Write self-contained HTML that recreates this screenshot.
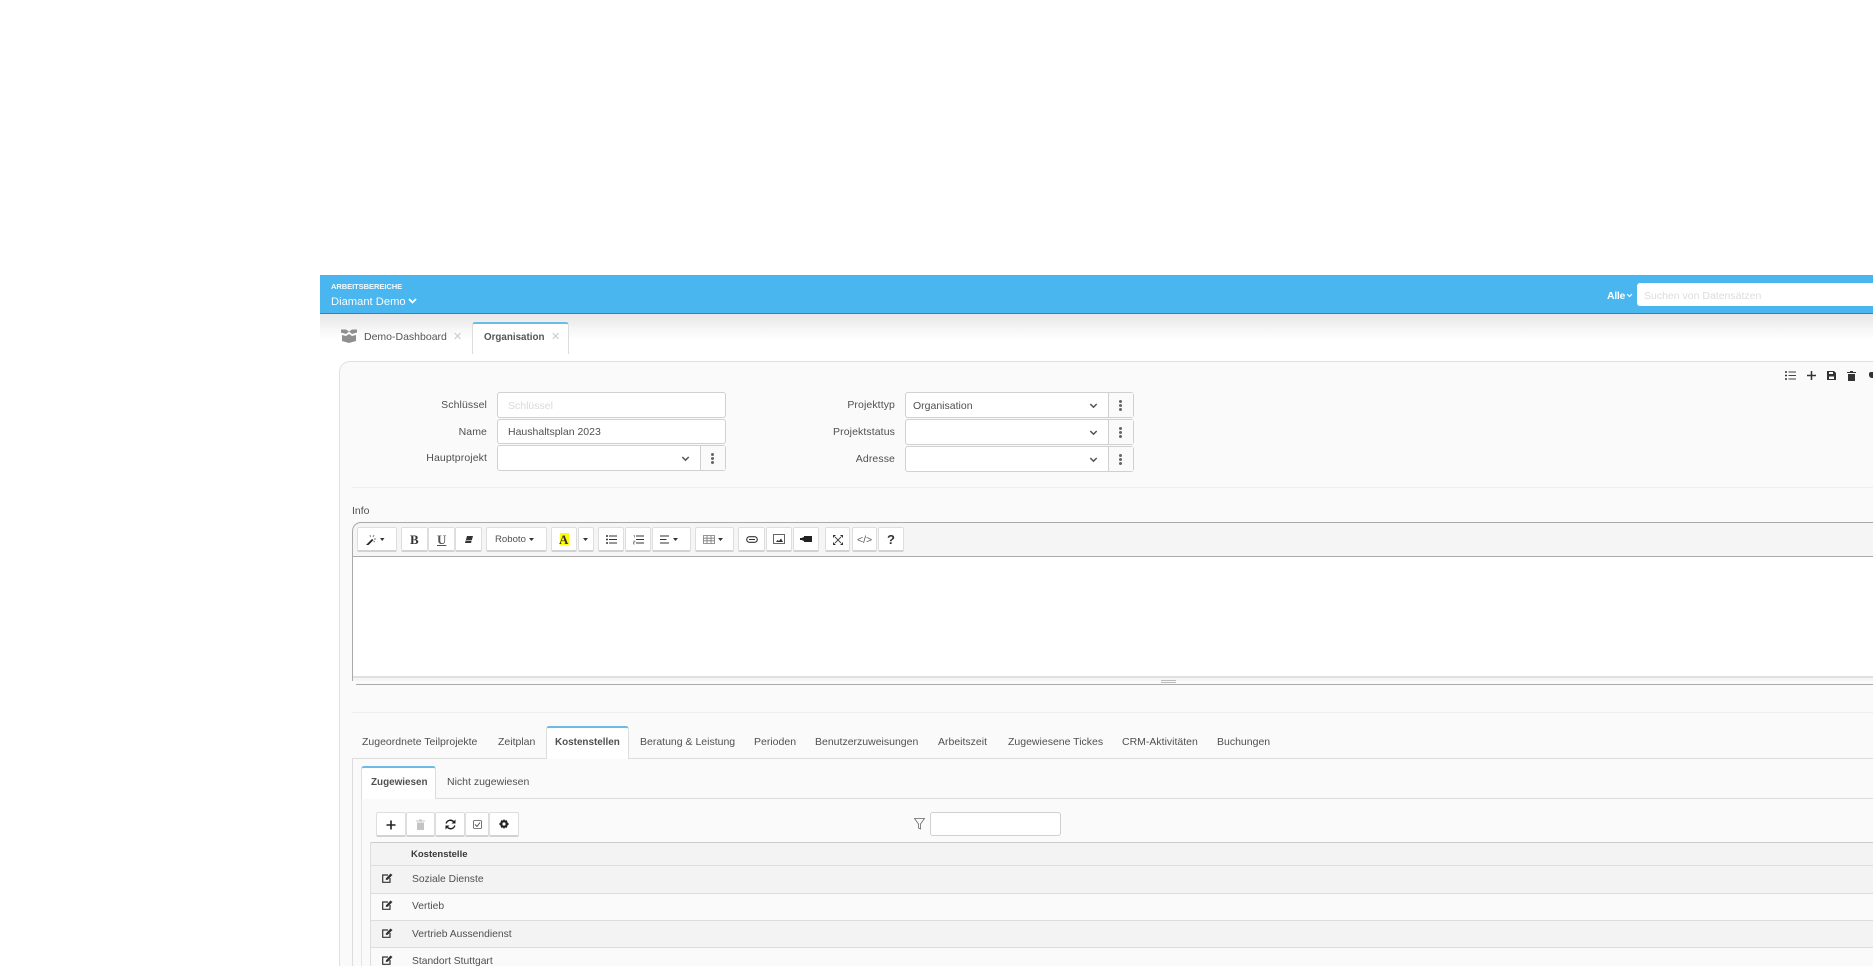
<!DOCTYPE html>
<html lang="de"><head><meta charset="utf-8"><title>Organisation</title>
<style>
html,body{margin:0;padding:0;background:#fff;width:1873px;height:966px;overflow:hidden}
#p{position:relative;width:1873px;height:966px;overflow:hidden;font-family:"Liberation Sans",sans-serif;font-size:10.5px;color:#505050;filter:blur(.35px)}
#p div,#p span.t,#p svg{position:absolute;box-sizing:border-box}
.t{white-space:nowrap;line-height:14px}
.r{text-align:right;letter-spacing:.1px}
.i{background:#fff;border:1px solid #d0d0d0;border-radius:3px}
.b{background:#fff;border:1px solid #dedede;border-bottom:2px solid #d2d2d2;border-radius:2px}
.l{left:0;right:0;height:1px;background:#ddd}
.d{width:3px;height:3px;background:#666;border-radius:50%}
</style></head><body><div id="p">

<!-- header -->
<div style="left:320px;top:275px;width:1553px;height:39px;background:#4ab6ef;border-bottom:1px solid #2b87b5"></div>
<div style="left:320px;top:314px;width:1553px;height:26px;background:linear-gradient(#e6e6e6,#f7f7f7 60%,#fff)"></div>
<span class="t" style="left:331px;top:280px;color:#fff;font-size:7.600px;font-weight:bold;letter-spacing:-.1px;opacity:.92">ARBEITSBEREICHE</span>
<span class="t" style="left:331px;top:295px;color:#fff;font-size:11.200px;opacity:.95">Diamant Demo</span>
<svg style="left:408px;top:298px" width="9" height="6" viewBox="0 0 9 6"><path d="M1 1l3.500 3.500L8 1" fill="none" stroke="#fff" stroke-width="1.800"/></svg>
<span class="t" style="left:1607px;top:289px;color:#fff;font-size:10.500px;font-weight:bold;letter-spacing:-.3px">Alle</span>
<svg style="left:1626px;top:293px" width="7" height="5" viewBox="0 0 7 5"><path d="M1 1l2.500 2.500L6 1" fill="none" stroke="#fff" stroke-width="1.200"/></svg>
<div style="left:1637px;top:283px;width:240px;height:23px;background:#fff;border-radius:3px 0 0 3px"></div>
<span class="t" style="left:1644px;top:289px;color:#dcdcdc">Suchen von Datensätzen</span>

<!-- page tabs -->
<svg style="left:340px;top:329px" width="18" height="14" viewBox="0 0 18 14"><path d="M1 .5h5l3 2-3 2.500-5-1.500zM17 .5h-5L9 2.500l3 2.500 5-1.500zM2 6l4 1 3-2 3 2 4-1v6l-7 2-7-2z" fill="#8f8f8f"/></svg>
<span class="t" style="left:364px;top:330px;color:#555">Demo-Dashboard</span>
<span class="t" style="left:453px;top:330px;color:#cacaca;font-size:11px">✕</span>
<div style="left:472px;top:322px;width:97px;height:32px;background:#fff;border:1px solid #ddd;border-top:2px solid #6bbbe6;border-bottom:0;border-radius:3px 3px 0 0"></div>
<span class="t" style="left:484px;top:331px;color:#555;font-weight:bold;font-size:9.800px">Organisation</span>
<span class="t" style="left:551px;top:330px;color:#cacaca;font-size:11px">✕</span>

<!-- main panel -->
<div style="left:339px;top:361px;width:1560px;height:640px;background:#fafafa;border:1px solid #e0e0e0;border-radius:11px 0 0 0"></div>

<!-- form left -->
<span class="t r" style="left:400px;width:87px;top:398px">Schlüssel</span>
<div class="i" style="left:497px;top:392px;width:229px;height:26px"></div>
<span class="t" style="left:508px;top:399px;color:#dadada">Schlüssel</span>
<span class="t r" style="left:400px;width:87px;top:425px">Name</span>
<div class="i" style="left:497px;top:419px;width:229px;height:25px"></div>
<span class="t" style="left:508px;top:425px">Haushaltsplan 2023</span>
<span class="t r" style="left:400px;width:87px;top:451px">Hauptprojekt</span>
<div class="i" style="left:497px;top:445px;width:229px;height:26px"></div>
<div style="left:700px;top:445px;width:1px;height:26px;background:#d0d0d0"></div>
<div style="left:701px;top:446px;width:24px;height:24px;background:#fafafa"></div>
<svg style="left:681px;top:456px" width="9" height="6" viewBox="0 0 9 6"><path d="M1.300 1l3.200 3.200L7.700 1" fill="none" stroke="#555" stroke-width="1.500"/></svg>
<div class="d" style="left:711px;top:453px"></div><div class="d" style="left:711px;top:457px"></div><div class="d" style="left:711px;top:461px"></div>

<!-- form right -->
<span class="t r" style="left:800px;width:95px;top:398px">Projekttyp</span>
<span class="t r" style="left:800px;width:95px;top:425px">Projektstatus</span>
<span class="t r" style="left:800px;width:95px;top:452px">Adresse</span>
<div class="i" style="left:905px;top:392px;width:229px;height:26px"></div>
<div class="i" style="left:905px;top:419px;width:229px;height:26px"></div>
<div class="i" style="left:905px;top:446px;width:229px;height:26px"></div>
<span class="t" style="left:913px;top:399px">Organisation</span>
<div style="left:1108px;top:392px;width:1px;height:80px;background:#d0d0d0"></div>
<div style="left:1109px;top:393px;width:24px;height:24px;background:#fafafa"></div>
<div style="left:1109px;top:420px;width:24px;height:24px;background:#fafafa"></div>
<div style="left:1109px;top:447px;width:24px;height:24px;background:#fafafa"></div>
<div style="left:1108px;top:418px;width:1px;height:1px;background:#fafafa"></div>
<div style="left:1108px;top:445px;width:1px;height:1px;background:#fafafa"></div>
<svg style="left:1089px;top:403px" width="9" height="6" viewBox="0 0 9 6"><path d="M1.300 1l3.200 3.200L7.700 1" fill="none" stroke="#555" stroke-width="1.500"/></svg>
<svg style="left:1089px;top:430px" width="9" height="6" viewBox="0 0 9 6"><path d="M1.300 1l3.200 3.200L7.700 1" fill="none" stroke="#555" stroke-width="1.500"/></svg>
<svg style="left:1089px;top:457px" width="9" height="6" viewBox="0 0 9 6"><path d="M1.300 1l3.200 3.200L7.700 1" fill="none" stroke="#555" stroke-width="1.500"/></svg>
<div class="d" style="left:1119px;top:400px"></div><div class="d" style="left:1119px;top:404px"></div><div class="d" style="left:1119px;top:408px"></div>
<div class="d" style="left:1119px;top:427px"></div><div class="d" style="left:1119px;top:431px"></div><div class="d" style="left:1119px;top:435px"></div>
<div class="d" style="left:1119px;top:454px"></div><div class="d" style="left:1119px;top:458px"></div><div class="d" style="left:1119px;top:462px"></div>

<!-- record toolbar -->
<svg style="left:1785px;top:371px" width="11" height="9" viewBox="0 0 11 9"><path d="M3.500 1H11M3.500 4.500H11M3.500 8H11" stroke="#444" stroke-width="1"/><path d="M0 1h2M0 4.500h2M0 8h2" stroke="#333" stroke-width="1.500"/></svg>
<svg style="left:1807px;top:371px" width="9" height="9" viewBox="0 0 9 9"><path d="M4.500 0v9M0 4.500h9" stroke="#333" stroke-width="1.500"/></svg>
<svg style="left:1827px;top:371px" width="9" height="9" viewBox="0 0 9 9"><path d="M0 0h7l2 2v7H0z" fill="#333"/><rect x="2" y="1" width="4" height="2" fill="#fafafa"/><rect x="2" y="5.500" width="5" height="2.500" fill="#fafafa"/></svg>
<svg style="left:1847px;top:371px" width="9" height="10" viewBox="0 0 9 10"><path d="M0 1h3V0h3v1h3v1H0zM1 3h7v7H1z" fill="#333"/></svg>
<div style="left:1869px;top:372px;width:6px;height:6px;background:#333;border-radius:2px 0 0 3px"></div>

<div class="l" style="left:352px;right:0;top:487px;background:#eee"></div>
<span class="t" style="left:352px;top:504px">Info</span>

<!-- editor -->
<div style="left:352px;top:522px;width:1530px;height:159px;background:#f5f5f5;border:1px solid #aaa;border-right:0;border-bottom:0;border-radius:9px 0 0 0"></div>
<div style="left:353px;top:556px;width:1520px;height:120px;background:#fff;border-top:1px solid #aaa"></div>
<div style="left:353px;top:676px;width:1520px;height:2px;background:#e0e0e0"></div>
<div style="left:356px;top:684px;width:1517px;height:1px;background:#aaa"></div>
<div style="left:1161px;top:680px;width:15px;height:1px;background:#bbb"></div>
<div style="left:1161px;top:682px;width:15px;height:1px;background:#bbb"></div>

<div class="b" style="left:357px;top:527px;width:40px;height:25px"></div>
<svg style="left:365px;top:534px" width="20" height="11" viewBox="0 0 20 11"><path d="M1 11l6-6 1.500 1-6 6z" fill="#222"/><path d="M5 1l.500 2M9 1L8 3M11 5H9M10 8L8.500 7" stroke="#777" stroke-width=".9"/><path d="M15 4h4.500L17.200 7z" fill="#333"/></svg>
<div class="b" style="left:401px;top:527px;width:27px;height:25px"></div>
<span class="t" style="left:410px;top:532px;font:bold 13px 'Liberation Serif',serif;color:#333">B</span>
<div class="b" style="left:428px;top:527px;width:27px;height:25px"></div>
<span class="t" style="left:437px;top:532px;font:bold 13px 'Liberation Serif',serif;color:#555;text-decoration:underline">U</span>
<div class="b" style="left:455px;top:527px;width:27px;height:25px"></div>
<svg style="left:465px;top:536px" width="8" height="7" viewBox="0 0 8 7"><path d="M2 0h6L6 7H0z" fill="#333"/><path d="M1 4.300h6" stroke="#fff" stroke-width=".6"/></svg>
<div class="b" style="left:486px;top:527px;width:61px;height:25px"></div>
<span class="t" style="left:495px;top:533px;font-size:9.600px">Roboto</span>
<svg style="left:529px;top:538px" width="5" height="3"><path d="M0 0h5L2.500 3z" fill="#333"/></svg>
<div class="b" style="left:551px;top:527px;width:26px;height:25px"></div>
<div style="left:560px;top:533px;width:9px;height:12px;background:#ff0"></div>
<span class="t" style="left:559px;top:532px;font:bold 13px 'Liberation Serif',serif;color:#333">A</span>
<div class="b" style="left:578px;top:527px;width:16px;height:25px"></div>
<svg style="left:583px;top:538px" width="5" height="3"><path d="M0 0h5L2.500 3z" fill="#333"/></svg>
<div class="b" style="left:598px;top:527px;width:26px;height:25px"></div>
<svg style="left:606px;top:535px" width="11" height="9" viewBox="0 0 11 9"><path d="M3 1h8M3 4.500h8M3 8h8" stroke="#333"/><path d="M0 1h2M0 4.500h2M0 8h2" stroke="#333" stroke-width="1.500"/></svg>
<div class="b" style="left:625px;top:527px;width:26px;height:25px"></div>
<svg style="left:633px;top:535px" width="11" height="10" viewBox="0 0 11 10"><path d="M3 1h8M3 4.500h8M3 8h8" stroke="#333"/><path d="M.5 .5h1v2M.5 6h1.500v1H.5V9H2" stroke="#555" stroke-width=".6" fill="none"/></svg>
<div class="b" style="left:652px;top:527px;width:39px;height:25px"></div>
<svg style="left:660px;top:535px" width="10" height="9" viewBox="0 0 10 9"><path d="M0 1h9M0 4.500h6.500M0 8h9" stroke="#333"/></svg>
<svg style="left:673px;top:538px" width="5" height="3"><path d="M0 0h5L2.500 3z" fill="#333"/></svg>
<div class="b" style="left:695px;top:527px;width:39px;height:25px"></div>
<svg style="left:703px;top:535px" width="12" height="9" viewBox="0 0 12 9"><path d="M.5.500h11v8H.5zM.5 3.200h11M.5 5.800h11M4 .5v8M8 .5v8" fill="none" stroke="#777" stroke-width=".8"/></svg>
<svg style="left:718px;top:538px" width="5" height="3"><path d="M0 0h5L2.500 3z" fill="#333"/></svg>
<div class="b" style="left:738px;top:527px;width:27px;height:25px"></div>
<svg style="left:746px;top:536px" width="12" height="7" viewBox="0 0 12 7"><rect x=".7" y=".7" width="10.600" height="5.600" rx="2.800" fill="none" stroke="#333" stroke-width="1.100"/><path d="M3 3.500h6" stroke="#333"/></svg>
<div class="b" style="left:766px;top:527px;width:26px;height:25px"></div>
<svg style="left:773px;top:534px" width="12" height="10" viewBox="0 0 12 10"><rect x=".5" y=".5" width="11" height="9" fill="none" stroke="#666"/><path d="M3 8l1.500-2L6 7l2-2.500L10 8z" fill="#333"/></svg>
<div class="b" style="left:793px;top:527px;width:26px;height:25px"></div>
<svg style="left:800px;top:536px" width="12" height="6" viewBox="0 0 12 6"><rect x="4" width="8" height="6" fill="#222"/><path d="M0 2h1.500L4 1v4L1.500 4H0z" fill="#222"/></svg>
<div class="b" style="left:825px;top:527px;width:25px;height:25px"></div>
<svg style="left:833px;top:535px" width="10" height="10" viewBox="0 0 10 10"><path d="M2 2l6 6M8 2L2 8" stroke="#444" stroke-width=".9"/><path d="M0 0h3L0 3zM10 0H7l3 3zM0 10h3L0 7zM10 10H7l3-3z" fill="#333"/></svg>
<div class="b" style="left:852px;top:527px;width:25px;height:25px"></div>
<span class="t" style="left:857px;top:533px;font-size:10.500px;color:#555">&lt;/&gt;</span>
<div class="b" style="left:878px;top:527px;width:26px;height:25px"></div>
<span class="t" style="left:887px;top:533px;font-size:13px;font-weight:bold;color:#333">?</span>

<div class="l" style="left:352px;right:0;top:712px;background:#eee"></div>

<!-- tabs -->
<div class="l" style="left:352px;right:0;top:758px"></div>
<div style="left:546px;top:726px;width:83px;height:33px;background:#fff;border:1px solid #ddd;border-top:2px solid #6bbbe6;border-bottom:0;border-radius:3px 3px 0 0"></div>
<span class="t" style="left:362px;top:735px">Zugeordnete Teilprojekte</span>
<span class="t" style="left:498px;top:735px">Zeitplan</span>
<span class="t" style="left:555px;top:736px;font-weight:bold;font-size:9.900px">Kostenstellen</span>
<span class="t" style="left:640px;top:735px">Beratung &amp; Leistung</span>
<span class="t" style="left:754px;top:735px">Perioden</span>
<span class="t" style="left:815px;top:735px">Benutzerzuweisungen</span>
<span class="t" style="left:938px;top:735px">Arbeitszeit</span>
<span class="t" style="left:1008px;top:735px">Zugewiesene Tickes</span>
<span class="t" style="left:1122px;top:735px">CRM-Aktivitäten</span>
<span class="t" style="left:1217px;top:735px">Buchungen</span>
<div style="left:352px;top:758px;width:1px;height:210px;background:#ddd"></div>

<!-- subtabs -->
<div class="l" style="left:361px;right:0;top:798px"></div>
<div style="left:361px;top:799px;width:1px;height:170px;background:#e4e4e4"></div>
<div style="left:361px;top:766px;width:75px;height:33px;background:#fff;border:1px solid #ddd;border-top:2px solid #6bbbe6;border-bottom:0;border-radius:3px 3px 0 0"></div>
<span class="t" style="left:371px;top:776px;font-weight:bold;font-size:9.900px">Zugewiesen</span>
<span class="t" style="left:447px;top:775px">Nicht zugewiesen</span>

<!-- grid toolbar -->
<div class="b" style="left:376px;top:812px;width:30px;height:25px"></div>
<svg style="left:386px;top:820px" width="10" height="10" viewBox="0 0 10 10"><path d="M5 .5v9M.5 5h9" stroke="#222" stroke-width="1.600"/></svg>
<div class="b" style="left:406px;top:812px;width:29px;height:25px"></div>
<svg style="left:416px;top:819px" width="9" height="11" viewBox="0 0 9 11"><path d="M0 1.500h3V.5h3v1h3v1H0zM1 3.500h7V11H1z" fill="#c4c4c4"/></svg>
<div class="b" style="left:435px;top:812px;width:30px;height:25px"></div>
<svg style="left:445px;top:819px" width="11" height="11" viewBox="0 0 11 11"><path d="M1.200 4.500A4.300 4.300 0 0 1 8.800 3M9.800 6.500A4.300 4.300 0 0 1 2.200 8" fill="none" stroke="#222" stroke-width="1.400"/><path d="M10.500 .5v4h-4zM.5 10.500v-4h4z" fill="#222"/></svg>
<div class="b" style="left:465px;top:812px;width:24px;height:25px"></div>
<svg style="left:473px;top:820px" width="9" height="9" viewBox="0 0 9 9"><rect x=".5" y=".5" width="8" height="8" rx="1" fill="none" stroke="#555" stroke-width=".8"/><path d="M2 4.500L4 6.500 7 2.500" fill="none" stroke="#444" stroke-width=".9"/></svg>
<div class="b" style="left:489px;top:812px;width:30px;height:25px"></div>
<svg style="left:499px;top:819px" width="10" height="10" viewBox="0 0 10 10"><path d="M5 0l1 1.500 2-.3.300 2L10 5l-1.700 1.800-.3 2-2-.3L5 10 4 8.500l-2 .3-.3-2L0 5l1.700-1.800.3-2 2 .3z" fill="#222"/><circle cx="5" cy="5" r="1.600" fill="#fff"/></svg>
<svg style="left:914px;top:818px" width="11" height="12" viewBox="0 0 11 12"><path d="M.5.500h10L6.500 6v5l-2-1V6z" fill="none" stroke="#666" stroke-width=".8"/></svg>
<div class="i" style="left:930px;top:812px;width:131px;height:24px"></div>

<!-- grid -->
<div style="left:370px;top:842px;width:1503px;height:1px;background:#ccc"></div>
<div style="left:370px;top:842px;width:1px;height:130px;background:#ddd"></div>
<div style="left:371px;top:843px;width:1502px;height:50px;background:#f3f3f3"></div>
<div style="left:371px;top:920px;width:1502px;height:27px;background:#f3f3f3"></div>
<div style="left:371px;top:865px;width:1502px;height:1px;background:#ddd"></div>
<div style="left:371px;top:893px;width:1502px;height:1px;background:#ddd"></div>
<div style="left:371px;top:920px;width:1502px;height:1px;background:#ddd"></div>
<div style="left:371px;top:947px;width:1502px;height:1px;background:#ddd"></div>
<span class="t" style="left:411px;top:848px;font-weight:bold;font-size:9.500px;color:#3a3a3a">Kostenstelle</span>
<span class="t" style="left:412px;top:873px;font-size:10.300px">Soziale Dienste</span>
<span class="t" style="left:412px;top:900px;font-size:10.300px">Vertieb</span>
<span class="t" style="left:412px;top:928px;font-size:10.300px">Vertrieb Aussendienst</span>
<span class="t" style="left:412px;top:955px;font-size:10.300px">Standort Stuttgart</span>
<svg style="left:382px;top:873px" width="11" height="10" viewBox="0 0 11 10"><path d="M6 2H.7v7.300H8V5" fill="none" stroke="#333" stroke-width="1.200"/><path d="M4 5.200L8.500.5 10.500 2 5.800 6.800 3.800 7z" fill="#333"/></svg>
<svg style="left:382px;top:900px" width="11" height="10" viewBox="0 0 11 10"><path d="M6 2H.7v7.300H8V5" fill="none" stroke="#333" stroke-width="1.200"/><path d="M4 5.200L8.500.5 10.500 2 5.800 6.800 3.800 7z" fill="#333"/></svg>
<svg style="left:382px;top:928px" width="11" height="10" viewBox="0 0 11 10"><path d="M6 2H.7v7.300H8V5" fill="none" stroke="#333" stroke-width="1.200"/><path d="M4 5.200L8.500.5 10.500 2 5.800 6.800 3.800 7z" fill="#333"/></svg>
<svg style="left:382px;top:955px" width="11" height="10" viewBox="0 0 11 10"><path d="M6 2H.7v7.300H8V5" fill="none" stroke="#333" stroke-width="1.200"/><path d="M4 5.200L8.500.5 10.500 2 5.800 6.800 3.800 7z" fill="#333"/></svg>
</div></body></html>
